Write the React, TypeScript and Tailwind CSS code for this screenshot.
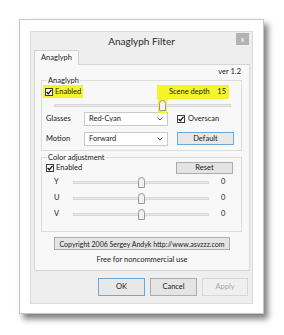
import React from "react";

function Check() {
  return (
    <span className="w-[8px] h-[8px] border border-[#3a3a3a] bg-white flex items-center justify-center shrink-0">
      <svg width="6" height="6" viewBox="0 0 6 6">
        <path d="M0.6 3 L2.3 4.8 L5.5 0.8" stroke="#111" strokeWidth="1.3" fill="none" />
      </svg>
    </span>
  );
}

function Thumb() {
  return (
    <svg width="7" height="11" viewBox="0 0 7 11">
      <path d="M0.5 3.5 Q0.5 0.5 3.5 0.5 Q6.5 0.5 6.5 3.5 V10.5 H0.5 Z" fill="#f2f2f2" stroke="#9a9a9a" strokeWidth="1" />
    </svg>
  );
}

function Select({ value }: { value: string }) {
  return (
    <div className="w-[84px] h-[14px] bg-white border border-[#c9c9c9] flex items-center pl-[4px] pr-[4px]">
      <span className="flex-1 text-[7.5px] leading-[10px]">{value}</span>
      <svg width="6" height="4" viewBox="0 0 6 4">
        <path d="M0.5 0.5 L3 3 L5.5 0.5" stroke="#555" strokeWidth="1" fill="none" />
      </svg>
    </div>
  );
}

function Btn({ label, w, h, focus, disabled, small }: { label: string; w: string; h: string; focus?: boolean; disabled?: boolean; small?: boolean }) {
  const cls = disabled
    ? "border-[#d6d6d6] bg-[#efefef] text-[#a8a8a8]"
    : focus
    ? "border-[#6ea7d8] bg-[#e8e8e8] text-[#1a1a1a]"
    : "border-[#adadad] bg-[#e4e4e4] text-[#1a1a1a]";
  const t = small ? "text-[7px]" : "text-[7.5px]";
  return (
    <div className={`${w} ${h} border ${cls} ${t} flex items-center justify-center leading-[10px] whitespace-nowrap`}>{label}</div>
  );
}

function SliderRow({ label }: { label: string }) {
  return (
    <div className="h-[16px] flex items-center pl-[11px]">
      <span className="w-[19px] text-[7.5px] leading-[10px]">{label}</span>
      <div className="relative w-[136px] h-[11px] flex items-center">
        <div className="w-full h-[3px] bg-[#e8e8e8] border border-[#dadada]" />
        <div className="absolute left-[65px] top-0">
          <Thumb />
        </div>
      </div>
      <span className="ml-[12px] text-[7.5px] leading-[10px]">0</span>
    </div>
  );
}

export default function App() {
  return (
    <div className="w-[284px] h-[335px] bg-white pt-[19px] pl-[19px] font-['Lato',sans-serif] text-[#1a1a1a]">
      <div className="w-[245px] h-[295px] border border-[#c6c6c6] bg-white shadow-[4px_5px_6px_rgba(0,0,0,0.5)] pt-[11px] pl-[10px]">
        <div className="w-[223px] h-[273px] bg-[#eeeeee] border border-[#dcdcdc] flex flex-col">
          {/* Title bar */}
          <div className="h-[18px] flex items-start pl-[16px] pr-[3px]">
            <div className="flex-1 text-center text-[10px] leading-[18px] text-[#2a2a2a]">Anaglyph Filter</div>
            <div className="mt-[1px] w-[13px] h-[12px] bg-[#b3b3b3] text-white text-[7px] leading-[12px] flex items-center justify-center">x</div>
          </div>
          {/* Tabs */}
          <div className="h-[14px] pl-[3px] flex items-end">
            <div className="w-[45px] h-[15px] -mb-px relative bg-[#f8f8f8] border border-b-0 border-[#d2d2d2] flex items-center justify-center text-[7.5px] leading-[10px]">
              Anaglyph
            </div>
          </div>
          {/* Panel */}
          <div className="ml-[3px] w-[216px] h-[207px] border border-[#d6d6d6] bg-[#f8f8f8] flex flex-col">
            <div className="pt-[2px] h-[11px] pr-[8px] text-right text-[7.5px] leading-[9px]">ver 1.2</div>
            <fieldset className="ml-[6px] mr-[7px] border border-[#dcdcdc] px-[1px] pb-[5px]">
              <legend className="ml-[4px] px-[1px] text-[7.5px] leading-[9px]">Anaglyph</legend>
              <div className="h-[13px] flex items-center justify-between pr-[11px]">
                <span className="h-[13px] w-[40px] bg-[#f4f42a] flex items-center gap-[2px] pl-[2px]">
                  <Check />
                  <span className="text-[7.5px] leading-[10px]">Enabled</span>
                </span>
                <span className="h-[14px] w-[72px] bg-[#f4f42a] flex items-center pl-[12px] pr-[3px] text-[7.5px] leading-[10px]">
                  <span className="flex-1">Scene depth</span>
                  <span>15</span>
                </span>
              </div>
              <div className="relative ml-[11px] w-[177px] h-[14px] flex items-center">
                <div className="w-full h-[3px] bg-[#e8e8e8] border border-[#dadada]" />
                <div className="absolute left-[104px] top-0 w-[9px] h-[15px] bg-[#f4f42a] flex items-center justify-center">
                  <Thumb />
                </div>
              </div>
              <div className="h-[14px] flex items-center pl-[3px]">
                <span className="w-[38px] text-[7.5px] leading-[10px]">Glasses</span>
                <Select value="Red-Cyan" />
                <span className="ml-[9px] flex items-center gap-[3px]">
                  <Check />
                  <span className="text-[7.5px] leading-[10px]">Overscan</span>
                </span>
              </div>
              <div className="mt-[6px] h-[13px] flex items-center pl-[3px]">
                <span className="w-[38px] text-[7.5px] leading-[10px]">Motion</span>
                <Select value="Forward" />
                <span className="ml-[9px]">
                  <Btn label="Default" w="w-[57px]" h="h-[13px]" focus />
                </span>
              </div>
            </fieldset>
            <fieldset className="mt-[2px] ml-[6px] mr-[7px] border border-[#dcdcdc] px-[1px] pb-[9px]">
              <legend className="ml-[4px] px-[1px] text-[7.5px] leading-[9px]">Color adjustment</legend>
              <div className="h-[11px] flex items-center justify-between pl-[3px] pr-[7px]">
                <span className="flex items-center gap-[2px]">
                  <Check />
                  <span className="text-[7.5px] leading-[10px]">Enabled</span>
                </span>
                <Btn label="Reset" w="w-[57px]" h="h-[12px]" />
              </div>
              <div className="mt-[1px]">
                <SliderRow label="Y" />
                <SliderRow label="U" />
                <SliderRow label="V" />
              </div>
            </fieldset>
            <div className="mt-[5px] flex justify-center">
              <Btn label="Copyright 2006 Sergey Andyk http://www.asvzzz.com" w="w-[176px]" h="h-[13px]" small />
            </div>
            <div className="mt-[5px] text-center text-[7.5px] leading-[10px]">Free for noncommercial use</div>
          </div>
          {/* Buttons */}
          <div className="pt-[7px] pr-[4px] flex justify-end gap-[5px]">
            <Btn label="OK" w="w-[47px]" h="h-[18px]" focus />
            <Btn label="Cancel" w="w-[47px]" h="h-[18px]" />
            <Btn label="Apply" w="w-[46px]" h="h-[18px]" disabled />
          </div>
        </div>
      </div>
    </div>
  );
}
